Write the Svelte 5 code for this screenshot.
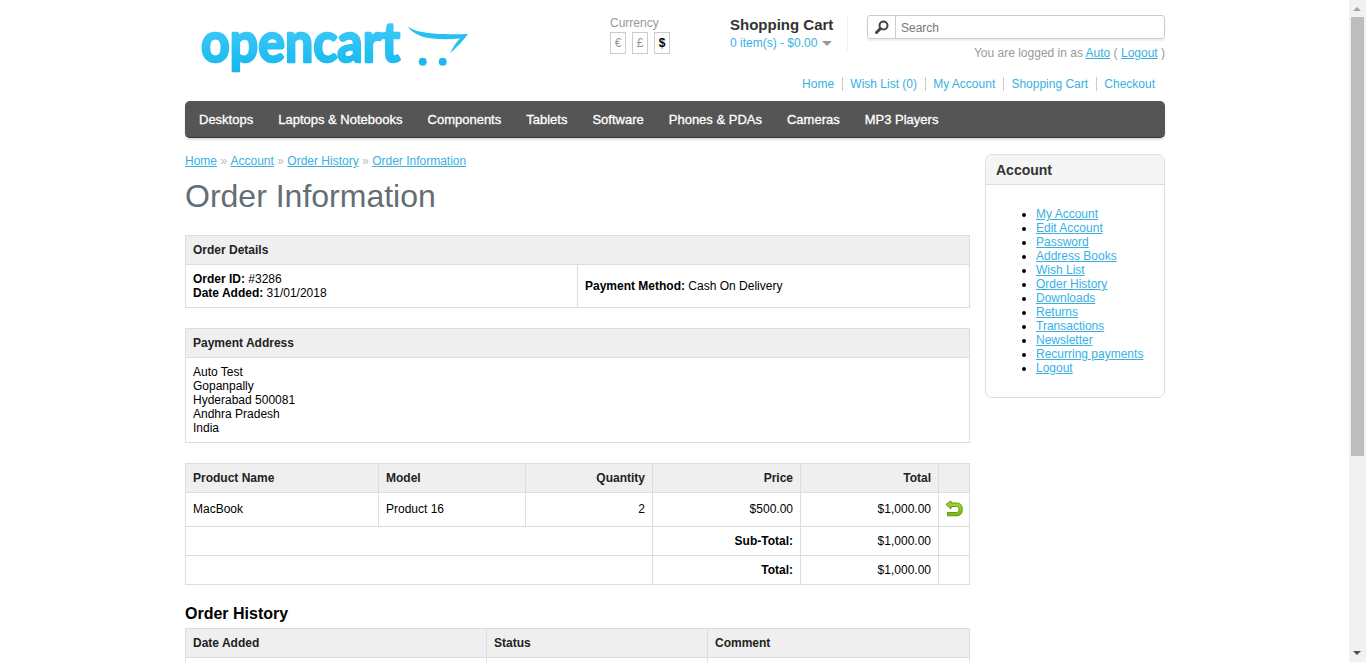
<script>
  const currencies = ["€", "£", "$"];
  const headerLinks = ["Home", "Wish List (0)", "My Account", "Shopping Cart", "Checkout"];
  const menu = ["Desktops", "Laptops & Notebooks", "Components", "Tablets", "Software", "Phones & PDAs", "Cameras", "MP3 Players"];
  const crumbs = ["Home", "Account", "Order History", "Order Information"];
  const accountLinks = ["My Account", "Edit Account", "Password", "Address Books", "Wish List", "Order History", "Downloads", "Returns", "Transactions", "Newsletter", "Recurring payments", "Logout"];
  const address = ["Auto Test", "Gopanpally", "Hyderabad 500081", "Andhra Pradesh", "India"];
</script>

<div class="page">
  <header class="header">
    <div class="logo">
      <svg width="290" height="70" viewBox="0 0 290 70">
        <defs>
          <linearGradient id="logo-fill" x1="0" y1="0" x2="0" y2="1">
            <stop offset="0" stop-color="#4dd0fa" />
            <stop offset="1" stop-color="#12b7ee" />
          </linearGradient>
        </defs>
        <text x="16" y="51" class="logo-text" fill="url(#logo-fill)" stroke="url(#logo-fill)" textLength="199" lengthAdjust="spacingAndGlyphs">opencart</text>
        <path d="M222.5 15 C229 21 244 24 283 23 C277 31 271 37 265 42.5 C268 36 271 31 275 27.5 C252 29.5 230 28 222.5 15 Z" fill="#28bff2" />
        <circle cx="237.7" cy="50.7" r="4" fill="#1cb9ef" />
        <circle cx="257.7" cy="50.7" r="4" fill="#1cb9ef" />
      </svg>
    </div>
    <div class="header-right">
      <div class="header-top">
        <div class="currency">
          <div class="currency-label">Currency</div>
          <div class="currency-list">
            {#each currencies as c, i}
              <span class="currency-item" class:active={i === 2}>{c}</span>
            {/each}
          </div>
        </div>
        <div class="cart">
          <h4>Shopping Cart</h4>
          <div class="cart-total">0 item(s) - $0.00 <span class="caret"></span></div>
        </div>
        <div class="search-col">
          <div class="search">
            <span class="search-btn">
              <svg width="16" height="16" viewBox="0 0 16 16">
                <circle cx="9.5" cy="6.5" r="4" fill="none" stroke="#444" stroke-width="2" />
                <path d="M6.5 9.5 L2.5 13.5" stroke="#444" stroke-width="3" stroke-linecap="round" />
              </svg>
            </span>
            <span class="search-text">Search</span>
          </div>
          <div class="welcome">You are logged in as <a href="#a">Auto</a> ( <a href="#a">Logout</a> )</div>
        </div>
      </div>
      <nav class="links">
        {#each headerLinks as link}
          <span class="link">{link}</span>
        {/each}
      </nav>
    </div>
  </header>

  <nav class="menu">
    {#each menu as item}
      <span class="menu-item">{item}</span>
    {/each}
  </nav>

  <div class="body">
    <main class="content">
      <div class="breadcrumb">
        {#each crumbs as crumb, i}
          {#if i > 0}<span class="sep">»</span>{/if}<a href="#a">{crumb}</a>
        {/each}
      </div>
      <h1>Order Information</h1>

      <table>
        <thead>
          <tr><th colspan="2">Order Details</th></tr>
        </thead>
        <tbody>
          <tr>
            <td class="half"><b>Order ID:</b> #3286<br /><b>Date Added:</b> 31/01/2018</td>
            <td class="half"><b>Payment Method:</b> Cash On Delivery</td>
          </tr>
        </tbody>
      </table>

      <table>
        <thead>
          <tr><th>Payment Address</th></tr>
        </thead>
        <tbody>
          <tr>
            <td>
              {#each address as line}{line}<br />{/each}
            </td>
          </tr>
        </tbody>
      </table>

      <table class="products">
        <colgroup>
          <col style="width: 193px" /><col style="width: 147px" /><col style="width: 127px" /><col style="width: 148px" /><col style="width: 138px" /><col />
        </colgroup>
        <thead>
          <tr>
            <th>Product Name</th><th>Model</th><th class="r">Quantity</th><th class="r">Price</th><th class="r">Total</th><th></th>
          </tr>
        </thead>
        <tbody>
          <tr class="item">
            <td>MacBook</td><td>Product 16</td><td class="r">2</td><td class="r">$500.00</td><td class="r">$1,000.00</td>
            <td class="icon-cell">
              <svg width="18" height="18" viewBox="0 0 18 18">
                <defs>
                  <linearGradient id="return-fill" x1="0" y1="0" x2="0" y2="1">
                    <stop offset="0" stop-color="#a9dc2e" />
                    <stop offset="1" stop-color="#7ab814" />
                  </linearGradient>
                </defs>
                <path d="M6 0.8 L1 4.5 L6 9 V6.5 H11.5 C13 6.5 14 7.5 14 9.5 C14 11.5 13 12.5 11.5 12.5 H2.5 V15.8 H12 C15.5 15.8 17.3 13 17.3 9.5 C17.3 5.8 15.5 3 12 3 H6 Z" fill="url(#return-fill)" stroke="#5d9b10" stroke-width="1" stroke-linejoin="round" />
              </svg>
            </td>
          </tr>
          <tr>
            <td colspan="3"></td><td class="r"><b>Sub-Total:</b></td><td class="r">$1,000.00</td><td></td>
          </tr>
          <tr>
            <td colspan="3"></td><td class="r"><b>Total:</b></td><td class="r">$1,000.00</td><td></td>
          </tr>
        </tbody>
      </table>

      <h2>Order History</h2>
      <table class="history">
        <colgroup>
          <col style="width: 301px" /><col style="width: 221px" /><col />
        </colgroup>
        <thead>
          <tr><th>Date Added</th><th>Status</th><th>Comment</th></tr>
        </thead>
        <tbody>
          <tr><td>31/01/2018</td><td>Pending</td><td></td></tr>
        </tbody>
      </table>
    </main>

    <aside class="column-right">
      <div class="box">
        <div class="box-heading">Account</div>
        <div class="box-content">
          <ul>
            {#each accountLinks as link}
              <li><a href="#a">{link}</a></li>
            {/each}
          </ul>
        </div>
      </div>
    </aside>
  </div>
</div>

<div class="scrollbar">
  <span class="arrow up"></span>
  <div class="thumb"></div>
  <span class="arrow down"></span>
</div>

<style>
  :global(html), :global(body) {
    overflow: hidden;
    height: 100%;
  }

  :global(body) {
    background: #fff;
    color: #000;
    font-family: "Liberation Sans", Arial, sans-serif;
    font-size: 12px;
  }

  a {
    color: #38b0e3;
    text-decoration: underline;
  }

  .page {
    width: 980px;
    margin-left: 185px;
  }

  .header {
    display: flex;
    height: 101px;
  }

  .logo {
    width: 425px;
    padding-top: 11px;
    box-sizing: border-box;
  }

  .logo svg {
    display: block;
  }

  .logo-text {
    font-family: Lato, "Open Sans", sans-serif;
    font-size: 55px;
    font-weight: 700;
    stroke-width: 2.5px;
    stroke-linejoin: round;
  }

  .header-right {
    flex: 1;
  }

  .header-top {
    display: flex;
    height: 77px;
    padding-top: 15px;
    box-sizing: border-box;
  }

  .currency {
    width: 120px;
    color: #999;
  }

  .currency-label {
    line-height: 14px;
    margin: 1px 0 2px;
  }

  .currency-list {
    display: flex;
    gap: 6px;
  }

  .currency-item {
    width: 14px;
    height: 20px;
    border: 1px solid #ccc;
    text-align: center;
    line-height: 20px;
    font-size: 12px;
  }

  .currency-item.active {
    color: #000;
    font-weight: bold;
  }

  .cart {
    width: 117px;
    height: 35px;
    border-right: 1px solid #eee;
    margin-right: 19px;
  }

  .cart h4 {
    margin: 2px 0 3px;
    color: #333;
    font-size: 15px;
    line-height: 16px;
    font-weight: bold;
  }

  .cart-total {
    color: #38b0e3;
    line-height: 14px;
  }

  .caret {
    display: inline-block;
    margin-left: 1px;
    vertical-align: 1px;
    border-left: 5px solid transparent;
    border-right: 5px solid transparent;
    border-top: 5px solid #999;
  }

  .search-col {
    width: 298px;
  }

  .search {
    display: flex;
    height: 24px;
    box-sizing: border-box;
    border: 1px solid #ccc;
    border-radius: 3px;
    box-shadow: 0 2px 2px #eee;
  }

  .search-btn {
    width: 27px;
    display: flex;
    align-items: center;
    justify-content: center;
    border-right: 1px solid #ccc;
  }

  .search-text {
    padding-left: 5px;
    line-height: 24px;
    color: #777;
  }

  .welcome {
    margin-top: 6px;
    text-align: right;
    color: #999;
    line-height: 16px;
  }

  .links {
    display: flex;
    justify-content: flex-end;
    padding-right: 2.4px;
  }

  .link {
    color: #38b0e3;
    line-height: 14px;
    padding: 0 7.6px;
    border-right: 1px solid #ccc;
  }

  .link:last-child {
    border-right: 0;
  }

  .menu {
    display: flex;
    gap: 25px;
    height: 37px;
    align-items: center;
    padding-left: 14px;
    background: #555;
    border-radius: 5px;
    box-shadow: 0 2px 2px #ddd;
    border-bottom: 1px solid #333;
    box-sizing: border-box;
  }

  .menu-item {
    color: #fff;
    font-size: 13px;
    line-height: 15px;
    -webkit-text-stroke: 0.3px #fff;
  }

  .body {
    display: flex;
    gap: 15px;
    margin-top: 16px;
  }

  .content {
    width: 785px;
  }

  .breadcrumb {
    line-height: 14px;
  }

  .sep {
    color: #bbb;
    margin: 0 3.4px;
  }

  h1 {
    margin: 7px 0 18px;
    color: #636e75;
    font-size: 32px;
    line-height: 42px;
    font-weight: normal;
  }

  h2 {
    margin: 0 0 5px;
    font-size: 16px;
    line-height: 18px;
    font-weight: bold;
    color: #000;
  }

  table {
    width: 785px;
    border-collapse: collapse;
    table-layout: fixed;
    margin-bottom: 20px;
  }

  th, td {
    border: 1px solid #ddd;
    padding: 7px;
    line-height: 14px;
    text-align: left;
    font-size: 12px;
  }

  th {
    background: #efefef;
    font-weight: bold;
    color: #222;
  }

  .half {
    width: 50%;
  }

  th.r, td.r {
    text-align: right;
  }

  .products tbody td {
    height: 14px;
  }

  .products .item td {
    height: 19px;
    padding-top: 6px;
    padding-bottom: 8px;
  }

  .products .item .icon-cell {
    padding: 0 0 2px;
    text-align: center;
    line-height: 0;
  }

  .column-right {
    width: 180px;
  }

  .box {
    border: 1px solid #ddd;
    border-radius: 7px;
    height: 244px;
    box-sizing: border-box;
  }

  .box-heading {
    height: 30px;
    box-sizing: border-box;
    padding-left: 10px;
    line-height: 30px;
    font-size: 14px;
    font-weight: bold;
    color: #333;
    background: #f5f5f5;
    border-bottom: 1px solid #ddd;
    border-radius: 7px 7px 0 0;
  }

  .box-content ul {
    margin: 22px 0 0;
    padding-left: 50px;
  }

  .box-content li {
    line-height: 14px;
  }

  .scrollbar {
    position: fixed;
    top: 0;
    right: 0;
    bottom: 0;
    width: 17px;
    background: #f1f1f1;
  }

  .thumb {
    position: absolute;
    top: 17px;
    left: 2px;
    width: 13px;
    height: 439px;
    background: #bdbdbd;
  }

  .arrow {
    position: absolute;
    left: 4px;
    border-left: 4px solid transparent;
    border-right: 4px solid transparent;
  }

  .arrow.up {
    top: 7px;
    border-bottom: 4px solid #a3a3a3;
  }

  .arrow.down {
    bottom: 7px;
    border-top: 4px solid #505050;
  }
</style>
